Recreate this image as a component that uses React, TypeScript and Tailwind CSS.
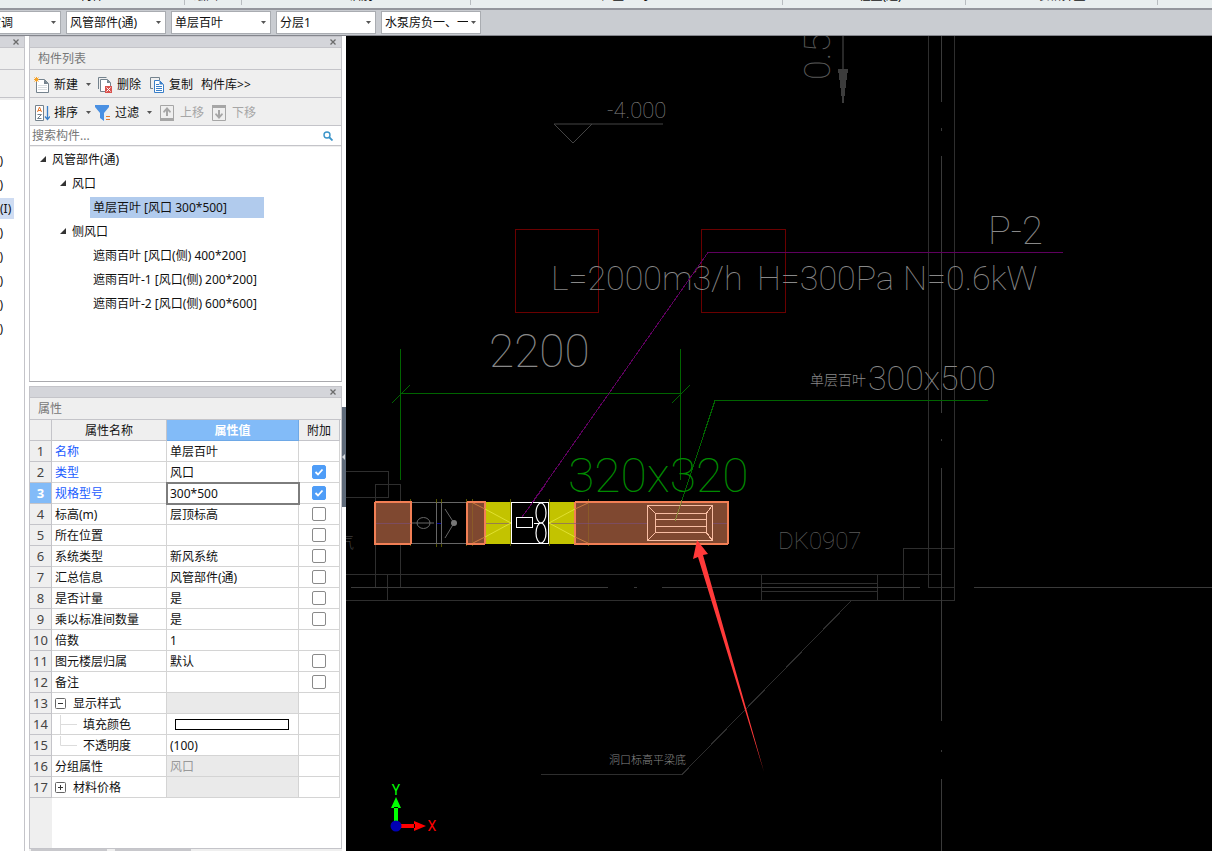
import { ReactNode } from "react";

interface TreeItem {
  label: string;
  level: 0 | 1 | 2;
  selected?: boolean;
}

interface PropertyRow {
  name: string;
  value?: string;
  extra?: boolean;
  checked?: boolean;
  link?: boolean;
  active?: boolean;
  shaded?: boolean;
  kind?: "open" | "closed" | "child" | "lastChild";
  swatch?: boolean;
}

const filters = ["通风空调", "风管部件(通)", "单层百叶", "分层1", "水泵房负一、一"];

const ribbonGroups = [
  { label: "构件", className: "w-[185px]" },
  { label: "绘图", className: "w-[57px] pr-[14px]" },
  { label: "识别", className: "w-[229px] pl-[10px]" },
  { label: "检查/显示", className: "w-[312px]" },
  { label: "工程量(通)", className: "w-[183px]" },
  { label: "表格算量", className: "w-[192px]" },
];

const categoryItems = [")", ")", "(I)", ")", ")", ")", ")", ")"];

const treeItems: TreeItem[] = [
  { label: "风管部件(通)", level: 0 },
  { label: "风口", level: 1 },
  { label: "单层百叶 [风口 300*500]", level: 2, selected: true },
  { label: "侧风口", level: 1 },
  { label: "遮雨百叶 [风口(侧) 400*200]", level: 2 },
  { label: "遮雨百叶-1 [风口(侧) 200*200]", level: 2 },
  { label: "遮雨百叶-2 [风口(侧) 600*600]", level: 2 },
];

const properties: PropertyRow[] = [
  { name: "名称", value: "单层百叶", link: true },
  { name: "类型", value: "风口", link: true, extra: true, checked: true },
  { name: "规格型号", value: "300*500", link: true, extra: true, checked: true, active: true },
  { name: "标高(m)", value: "层顶标高", extra: true },
  { name: "所在位置", extra: true },
  { name: "系统类型", value: "新风系统", extra: true },
  { name: "汇总信息", value: "风管部件(通)", extra: true },
  { name: "是否计量", value: "是", extra: true },
  { name: "乘以标准间数量", value: "是", extra: true },
  { name: "倍数", value: "1" },
  { name: "图元楼层归属", value: "默认", extra: true },
  { name: "备注", extra: true },
  { name: "显示样式", shaded: true, kind: "open" },
  { name: "填充颜色", swatch: true, kind: "child" },
  { name: "不透明度", value: "(100)", kind: "lastChild" },
  { name: "分组属性", value: "风口", shaded: true },
  { name: "材料价格", shaded: true, kind: "closed" },
];

const Caret = ({ className = "" }: { className?: string }) => (
  <svg viewBox="0 0 5 3" className={`h-[3px] w-[5px] shrink-0 ${className}`} aria-hidden="true">
    <path d="M0 0h5L2.500 3z" fill="#555" />
  </svg>
);

const PanelBar = () => (
  <div className="flex h-[11px] shrink-0 items-center justify-end border-b border-[#c4c4c9] bg-[#d4d5da] pr-[5px]">
    <button aria-label="关闭" className="flex">
      <svg viewBox="0 0 6 6" className="size-[6px]">
        <path d="M.5 .5l5 5M5.500 .5l-5 5" stroke="#6b6b6b" strokeWidth="1.3" />
      </svg>
    </button>
  </div>
);

const ToolButton = ({
  icon,
  label,
  disabled,
  menu,
  className = "",
}: {
  icon?: ReactNode;
  label: string;
  disabled?: boolean;
  menu?: boolean;
  className?: string;
}) => (
  <button
    disabled={disabled}
    className={`flex items-center gap-1 whitespace-nowrap disabled:text-[#a6a6a6] ${className}`}
  >
    {icon}
    <span>{label}</span>
    {menu && <Caret className="ml-1" />}
  </button>
);

const NewIcon = () => (
  <svg viewBox="0 0 16 16" className="size-4">
    <path d="M2.500 2.500h8l4 4v9h-12z" fill="#fff" stroke="#74828d" />
    <path d="M10 2.500v4.500h4.500z" fill="#74828d" />
    <path d="M4 8.500h9M4 10.500h9M4 12.500h9" stroke="#d9dde0" />
    <circle cx="2.500" cy="2.500" r="2.500" fill="#efefef" />
    <path d="M2.500 0v5M0 2.500h5M.5 .5l4 4M4.500 .5l-4 4" stroke="#f5a32a" />
  </svg>
);

const DeleteIcon = () => (
  <svg viewBox="0 0 16 16" className="size-4">
    <path d="M1.500 12V.5h8" fill="none" stroke="#74828d" />
    <path d="M3.500 2.500h7l3 3v9h-10z" fill="#fff" stroke="#74828d" />
    <path d="M10 2.500v3.500h3.500z" fill="#74828d" />
    <path d="M8 9h7v7H8z" fill="#d9534f" />
    <path d="M9.500 10.500l4 4M13.500 10.500l-4 4" stroke="#fff" />
  </svg>
);

const CopyIcon = () => (
  <svg viewBox="0 0 16 16" className="size-4">
    <path d="M4 11.500H1.500V.5h9V3" fill="none" stroke="#74828d" />
    <path d="M5.500 3.500h5l4 4v8h-9z" fill="#fff" stroke="#3a7fc8" />
    <path d="M10.500 3.500v4h4z" fill="#3a7fc8" />
    <path d="M7 7.500h3M7 9.500h6M7 11.500h6M7 13.500h6" stroke="#3a7fc8" />
  </svg>
);

const SortIcon = () => (
  <svg viewBox="0 0 16 16" className="size-4">
    <path d="M1.500 .5h8v15h-8z" fill="#fff" stroke="#74828d" />
    <path d="M3.500 7L5.500 2l2 5M4 5.500h3" fill="none" stroke="#e8792b" />
    <path d="M3.500 9.500h4l-4 4h4" fill="none" stroke="#74828d" />
    <path d="M13.500 1v13M11 11.500l2.500 3 2.500-3" fill="none" stroke="#3a7fc8" strokeWidth="1.3" />
  </svg>
);

const FilterIcon = () => (
  <svg viewBox="0 0 16 16" className="size-4">
    <path d="M0 0h14v2L9 8v8l-4-3V8L0 2z" fill="#4a90e2" />
    <path d="M11 11.500h4M11 14.500h4" stroke="#e8792b" />
  </svg>
);

const MoveIcon = ({ down }: { down?: boolean }) => (
  <svg viewBox="0 0 16 16" className="size-4">
    <path d="M.5 .5h13v15H.5z" fill="#efefef" stroke="#a6a6a6" />
    {down ? (
      <path d="M0 0h14v3H0zM6 5h2v5l2-2 1 1.500L7 14l-4-4.500L4 8l2 2z" fill="#a6a6a6" />
    ) : (
      <path d="M0 13h14v3H0zM6 11h2V6l2 2 1-1.500L7 2 3 6.500 4 8l2-2z" fill="#a6a6a6" />
    )}
  </svg>
);

const CategoryPanel = () => (
  <aside className="flex w-[25px] shrink-0 flex-col overflow-hidden border-t border-r border-[#c4c4c9] bg-white">
    <PanelBar />
    <div className="h-[22px] shrink-0 border-b border-[#c4c4c9] bg-[#efefef]" />
    <div className="h-[28px] shrink-0 border-b border-[#c4c4c9] bg-[#efefef]" />
    <div className="h-[2px] shrink-0 bg-[#efefef]" />
    <ul className="mt-12">
      {categoryItems.map((item, i) => (
        <li key={i} className="flex h-6 items-center">
          <span
            className={
              item === "(I)"
                ? "h-[21px] w-[14px] bg-[#cfdcf2] leading-[21px]"
                : "flex w-[3px] justify-end leading-[21px]"
            }
          >
            {item}
          </span>
        </li>
      ))}
    </ul>
  </aside>
);

const ComponentList = () => (
  <section className="flex h-[346px] shrink-0 flex-col border border-[#c4c4c9] border-b-[#a9a9ad] bg-white">
    <PanelBar />
    <h2 className="h-[22px] shrink-0 border-b border-[#c4c4c9] bg-[#efefef] pl-2 leading-[21px] text-[#777]">
      构件列表
    </h2>
    <div className="flex h-[28px] shrink-0 items-center border-b border-[#c4c4c9] bg-[#efefef] pt-[2px] pl-1">
      <ToolButton icon={<NewIcon />} label="新建" menu />
      <ToolButton icon={<DeleteIcon />} label="删除" className="ml-[6px]" />
      <ToolButton icon={<CopyIcon />} label="复制" className="ml-2" />
      <ToolButton label="构件库>>" className="ml-2" />
    </div>
    <div className="flex h-[28px] shrink-0 items-center border-b border-[#c4c4c9] bg-[#efefef] pt-[2px] pl-1">
      <ToolButton icon={<SortIcon />} label="排序" menu />
      <ToolButton icon={<FilterIcon />} label="过滤" menu className="ml-1" />
      <ToolButton icon={<MoveIcon />} label="上移" disabled className="ml-2" />
      <ToolButton icon={<MoveIcon down />} label="下移" disabled className="ml-2" />
    </div>
    <div className="flex h-[20px] shrink-0 items-center border-b border-[#c4c4c9] pt-px pr-2 pl-[2px]">
      <input
        aria-label="搜索构件"
        placeholder="搜索构件..."
        className="min-w-0 flex-1 outline-none placeholder:text-[#777]"
      />
      <svg viewBox="0 0 10 10" className="size-[10px]">
        <circle cx="4" cy="4" r="3" fill="none" stroke="#3b94c9" strokeWidth="1.4" />
        <path d="M6 6l3.500 3.500" stroke="#3b94c9" strokeWidth="1.8" />
      </svg>
    </div>
    <div className="h-px shrink-0 bg-[#efefef]" />
    <ul role="tree" className="min-h-0 flex-1 overflow-hidden">
      {treeItems.map((item) => (
        <li
          key={item.label}
          role="treeitem"
          aria-selected={!!item.selected}
          className={`flex h-6 items-center gap-[6px] ${
            { 0: "pl-[10px]", 1: "pl-[30px]", 2: "pl-[60px]" }[item.level]
          }`}
        >
          {item.level < 2 && (
            <svg viewBox="0 0 6 6" className="size-[6px]">
              <path d="M6 0v6H0z" fill="#333" />
            </svg>
          )}
          <span
            className={`h-[21px] leading-[21px] ${item.level === 2 ? "pl-[3px]" : ""} ${
              item.selected ? "w-[174px] bg-[#b1cbed]" : ""
            }`}
          >
            {item.label}
          </span>
        </li>
      ))}
    </ul>
  </section>
);

const NameCell = ({ row }: { row: PropertyRow }) => {
  if (row.kind === "open" || row.kind === "closed") {
    return (
      <span className="flex items-center gap-[7px]">
        <svg viewBox="0 0 11 11" className="size-[11px]">
          <rect x=".5" y=".5" width="10" height="10" rx="1" fill="#fff" stroke="#666" />
          <path d={row.kind === "open" ? "M3 5.500h5" : "M3 5.500h5M5.500 3v5"} stroke="#333" />
        </svg>
        {row.name}
      </span>
    );
  }
  if (row.kind) {
    return (
      <span className="flex items-center">
        <svg viewBox="0 0 28 19" className="h-[19px] w-7">
          <path
            d={row.kind === "child" ? "M5.500 0v19M5.500 9.500H22" : "M5.500 0v9.500H22"}
            fill="none"
            stroke="#dcdcdc"
          />
        </svg>
        {row.name}
      </span>
    );
  }
  return <>{row.name}</>;
};

const PropertyPanel = () => (
  <section className="mt-[4px] flex min-h-0 flex-1 flex-col overflow-hidden border border-[#c4c4c9] bg-white">
    <PanelBar />
    <h2 className="h-[22px] shrink-0 border-b border-[#c4c4c9] bg-[#efefef] pl-2 leading-[21px] text-[#777]">
      属性
    </h2>
    <table className="w-[310px] table-fixed border-separate border-spacing-0">
      <thead>
        <tr className="h-[21px] bg-[#efefef]">
          <th className="w-[22px] border-r border-b border-[#c4c4c9] p-0" />
          <th className="w-[115px] border-r border-b border-[#c4c4c9] p-0 pt-px font-normal">属性名称</th>
          <th className="w-[132px] border-r border-b border-[#6ea8e6] bg-[#82bbf8] p-0 pt-px font-bold text-white">
            属性值
          </th>
          <th className="border-r border-b border-[#c4c4c9] p-0 pt-px font-normal">附加</th>
        </tr>
      </thead>
      <tbody>
        {properties.map((row, i) => (
          <tr key={row.name} className="h-[21px]">
            <th
              className={`border-r border-b border-[#c4c4c9] p-0 text-[13px] leading-[18px] ${
                row.active ? "bg-[#82bbf8] font-bold text-white" : "bg-[#efefef] font-normal text-[#444]"
              }`}
            >
              {i + 1}
            </th>
            <td className={`border-r border-b border-[#d4d4d4] p-0 pt-px pl-[3px] ${row.link ? "text-[#1a5cff]" : ""}`}>
              <NameCell row={row} />
            </td>
            <td
              className={`border-r border-b border-[#d4d4d4] p-0 pt-px ${
                row.shaded ? "bg-[#eaeaea] text-[#999]" : ""
              } ${row.active ? "outline-2 -outline-offset-1 outline-[#7d7d7d]" : ""}`}
            >
              {row.swatch ? (
                <div className="mr-[9px] ml-2 h-[11px] border border-black bg-white" />
              ) : row.active ? (
                <input
                  aria-label={row.name}
                  defaultValue={row.value}
                  className="block h-[18px] w-full bg-transparent pl-[3px] outline-none"
                />
              ) : (
                <span className="pl-[3px]">{row.value}</span>
              )}
            </td>
            <td className="border-r border-b border-[#d4d4d4] p-0">
              {row.extra && (
                <label className="relative mx-auto block size-[14px]">
                  <input
                    type="checkbox"
                    aria-label={`附加 ${row.name}`}
                    defaultChecked={row.checked}
                    className="peer block size-[14px] appearance-none rounded-[2px] border border-[#8a8a8a] bg-white checked:border-[#4f9df7] checked:bg-[#4f9df7]"
                  />
                  <svg
                    viewBox="0 0 14 14"
                    className="pointer-events-none absolute inset-0 hidden size-[14px] peer-checked:block"
                  >
                    <path d="M3.500 7l2.500 2.500 4.500-5" fill="none" stroke="#fff" strokeWidth="1.8" />
                  </svg>
                </label>
              )}
            </td>
          </tr>
        ))}
      </tbody>
    </table>
    <div className="w-[22px] flex-1 bg-[#efefef]" />
  </section>
);

const Drawing = () => (
  <svg
    viewBox="346 36 866 815"
    preserveAspectRatio="xMinYMin slice"
    className="block h-full w-full font-[Roboto,'Noto_Sans_CJK_SC',sans-serif] font-thin"
    fill="none"
    shapeRendering="crispEdges"
  >
    {/* walls and grid lines */}
    <g stroke="#2e2e2e">
      <path d="M928.500 36V587.500H954M954.500 36V600.500H346M346 574.500H941" />
      <path d="M903.500 600V548.500H954M761.500 575v25M877.500 575v25M761 583.500h116M761 591.500h116" />
      <path d="M346 471.500h42v26h-42M375.500 587V484.500h25V587M387.500 575v25" />
      <path d="M851 601L682 774.500H541" />
    </g>
    <g stroke="#3a3a3a">
      <path d="M941.500 36v66M941.500 128v3M941.500 156v257M941.500 439v2M941.500 468v253M941.500 750v2M941.500 779v72" />
      <path d="M351 587.500h257M634 587.500h3M662 587.500h258M974 587.500h238" />
    </g>

    {/* level mark and flow arrow */}
    <path d="M554 124h109" stroke="#222" strokeWidth="2" />
    <path d="M554 124l19 19 19-19" stroke="#444" />
    <path d="M843 36v34" stroke="#282828" strokeWidth="2" />
    <path d="M838 69h10l-5 38z" fill="#3c3c3c" />

    {/* openings */}
    <path d="M515.500 229.500h83v83h-83zM701.500 229.500h84v83h-84z" stroke="#6a0000" />

    <g fill="#888">
      <text x="607" y="118" fontSize="22">-4.000</text>
      <text x="988" y="244" fontSize="38">P-2</text>
      <text x="551" y="290" fontSize="34">L=2000m3/h</text>
      <text x="757" y="290" fontSize="34">H=300Pa</text>
      <text x="903" y="290" fontSize="34">N=0.6kW</text>
      <text x="489" y="367" fontSize="46">2200</text>
      <text x="810" y="385" fontSize="14" fontWeight="300">单层百叶</text>
      <text x="868" y="390" fontSize="34">300x500</text>
      <text x="609" y="764" fontSize="11" fontWeight="300">洞口标高平梁底</text>
    </g>
    <g fill="#5a5a5a">
      <text x="778" y="549" fontSize="24">DK0907</text>
      <text transform="translate(830 80) rotate(-90)" fontSize="36">0.55</text>
      <text x="338" y="548" fontSize="16">气</text>
    </g>

    {/* dimensions and leaders */}
    <g stroke="#006400">
      <path d="M400.500 349v131M680.500 349v131M400 393.500h280" />
      <path d="M392 403l18-18M672 403l18-18" />
      <path d="M988 400.500H715L675 521" />
    </g>
    <text x="568" y="492" fontSize="48" fill="#008a00">320x320</text>
    <path d="M1063 252.500H708L522 517" stroke="#5e005e" />

    {/* duct run */}
    <path d="M411 502.500h57M411 543.500h57" stroke="#666" />
    <path d="M436.500 503v41M441.500 503v41" stroke="#666" />
    <path d="M485 502h26v42h-26zM549 502h26v42h-26z" fill="#c3c300" />
    <path
      d="M410.500 499v47M436.500 499v4M436.500 544v3M441.500 499v4M441.500 544v3M466.500 499v47M510.500 499v47M549.500 499v47M472.500 499v47M588.500 499v47"
      stroke="#777700"
      opacity=".7"
    />
    <g fill="#7f4830" stroke="#f27f55" strokeWidth="2">
      <rect x="375" y="502" width="36" height="42" rx="1" />
      <rect x="467" y="502" width="18" height="42" rx="1" />
      <rect x="575" y="502" width="153" height="42" rx="1" />
    </g>
    <path d="M472.500 503v40M588.500 503v40" stroke="#8a5a28" />
    <path d="M376 523.500h35M486 523.500h24M550 523.500h97M712 523.500h15" stroke="#7a5080" opacity=".6" />
    <g shapeRendering="auto">
      <path d="M485 509l26 14-26 14M575 509l-26 14 26 14" stroke="#e0e030" />
      <path d="M473 503l12 6M473 543l12-6M588 503l-13 6M588 543l-13-6" stroke="#c87a40" />
      <ellipse cx="423.500" cy="523" rx="6.500" ry="5.500" stroke="#666" />
      <path d="M412 523h22M445 509l9 14-9 15" stroke="#666" />
      <circle cx="454" cy="523" r="3" fill="#777" />
    </g>
    <path d="M437 523.500h4" stroke="#0000a0" />
    <path d="M511 502.500h37v41h-37z" fill="#000" stroke="#fff" />
    <path d="M546 484L522 517" stroke="#5e005e" />
    <path d="M516.500 517.500h16v10h-16zM534 523.500h5" stroke="#fff" />
    <g shapeRendering="auto" stroke="#fff" strokeWidth="1.2">
      <ellipse cx="541" cy="513" rx="5" ry="10" />
      <ellipse cx="541" cy="533" rx="5" ry="10" />
    </g>

    {/* louver */}
    <g stroke="#f8bda3">
      <path d="M647.500 505.500h65v35h-65z" />
      <path d="M655.500 513.500h51v19h-51zM655 519.500h51M655 526.500h51" />
      <path d="M648 506l8 8M712 506l-6 8M648 540l8-8M712 540l-6-8" />
    </g>
    <path d="M682 500l-7 21" stroke="#8a8a3a" />

    {/* callout arrow */}
    <path d="M697 540l11 14-5 1 61 217L698 557l-5 2z" fill="#ff3a3a" shapeRendering="auto" />

    {/* axis gizmo */}
    <g shapeRendering="auto">
      <path d="M394 807h4v14h-4zM391 808h10l-5-11z" fill="#0f0" />
      <path d="M401 824h14v4h-14zM414 821v10l12-5z" fill="#f00" />
      <circle cx="396" cy="826" r="5.500" fill="#0000b4" />
    </g>
    <text x="396" y="795" fontSize="14" fontWeight="400" textAnchor="middle" fill="#0f0">Y</text>
    <text x="432" y="831" fontSize="14" fontWeight="400" textAnchor="middle" fill="#f00">X</text>
  </svg>
);

export default function App() {
  return (
    <div className="flex h-screen flex-col overflow-hidden bg-white font-['Noto_Sans','Noto_Sans_CJK_SC',sans-serif] text-[12px] leading-[18px] text-[#111]">
      <header className="shrink-0">
        <div className="flex h-2 items-start overflow-hidden bg-[#e9eeef]">
          {ribbonGroups.map((group) => (
            <div
              key={group.label}
              className={`flex h-[5px] shrink-0 items-end justify-center border-r border-[#b8bcc0] ${group.className}`}
            >
              <span>{group.label}</span>
            </div>
          ))}
        </div>
        <div className="flex h-7 items-center gap-[5px] overflow-hidden border-t-2 border-b border-t-[#94969d] border-b-[#84868d] bg-[#c9ccd1]">
          {filters.map((label, i) => (
            <div key={label} className={`relative w-[100px] shrink-0 ${i === 0 ? "-ml-[39px]" : ""}`}>
              <select
                aria-label={label}
                className="block h-[23px] w-full appearance-none overflow-hidden border border-[#a9acb1] bg-white pr-3 pl-[3px]"
              >
                <option>{label}</option>
              </select>
              <Caret className="pointer-events-none absolute top-[10px] right-[5px]" />
            </div>
          ))}
        </div>
      </header>

      <div className="flex min-h-0 flex-1">
        <CategoryPanel />
        <div className="ml-1 flex w-[313px] shrink-0 flex-col">
          <ComponentList />
          <PropertyPanel />
          <div className="flex h-[2px] shrink-0 gap-2 bg-[#efefef] pl-[2px]">
            <div className="w-[76px] bg-[#c8c8cc]" />
            <div className="w-[76px] bg-[#c8c8cc]" />
          </div>
        </div>
        <div className="flex w-1 shrink-0 flex-col">
          <button aria-label="折叠面板" className="mt-[371px] flex h-[100px] items-center bg-[#5f6b7a]">
            <svg viewBox="0 0 3 6" className="h-[6px] w-[3px]">
              <path d="M3 0v6L0 3z" fill="#d4d8dc" />
            </svg>
          </button>
        </div>
        <main className="min-w-0 flex-1 bg-black">
          <Drawing />
        </main>
      </div>
    </div>
  );
}
